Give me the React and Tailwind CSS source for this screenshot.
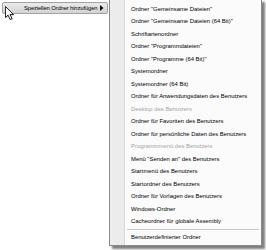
import React from 'react';

const items = [
  { label: 'Ordner "Gemeinsame Dateien"' },
  { label: 'Ordner "Gemeinsame Dateien (64 Bit)"' },
  { label: 'Schriftartenordner' },
  { label: 'Ordner "Programmdateien"' },
  { label: 'Ordner "Programme (64 Bit)"' },
  { label: 'Systemordner' },
  { label: 'Systemordner (64 Bit)' },
  { label: 'Ordner für Anwendungsdaten des Benutzers' },
  { label: 'Desktop des Benutzers', disabled: true },
  { label: 'Ordner für Favoriten des Benutzers' },
  { label: 'Ordner für persönliche Daten des Benutzers' },
  { label: 'Programmmenü des Benutzers', disabled: true },
  { label: 'Menü "Senden an" des Benutzers' },
  { label: 'Startmenü des Benutzers' },
  { label: 'Startordner des Benutzers' },
  { label: 'Ordner für Vorlagen des Benutzers' },
  { label: 'Windows-Ordner' },
  { label: 'Cacheordner für globale Assembly' },
];

const Row = ({ label, disabled }) => (
  <div
    className={`h-[12.5px] flex items-center pl-[5px] whitespace-nowrap ${
      disabled ? 'text-[#a4a4a4]' : 'text-black'
    }`}
  >
    {label}
  </div>
);

const Cursor = () => (
  <svg width="12" height="16" viewBox="0 0 12 16" className="absolute left-[4px] top-[5px]">
    <path d="M1.5 1.5 L1.5 12.5 L4 10 L6 14.5 L8 13.5 L6 9.5 L9.5 9.5 Z" fill="#000" opacity="0.25" transform="translate(1 1)" />
    <path d="M1.5 1.5 L1.5 12.5 L4 10 L6 14.5 L8 13.5 L6 9.5 L9.5 9.5 Z" fill="#fff" stroke="#111" strokeWidth="0.9" strokeLinejoin="round" />
  </svg>
);

export default function App() {
  return (
    <div className="w-[266px] h-[250px] bg-white relative overflow-hidden flex items-start font-['Liberation_Sans',Arial,sans-serif] text-[5.9px]">
      {/* Hauptmenü mit markiertem Eintrag */}
      <div className="w-[109px] pt-[2px] pl-[2px] pr-[1px]">
        <div className="h-[12px] flex items-center rounded-[2px] border border-[#a2a2a2] bg-gradient-to-b from-[#ebebeb] to-[#d2d2d2] pl-[21px] pr-[3px] text-black">
          <span className="flex-1 whitespace-nowrap tracking-[-0.15px]">Speziellen Ordner hinzufügen</span>
          <svg width="4" height="6" viewBox="0 0 4 6" className="shrink-0">
            <path d="M0 0 L3.5 3 L0 6 Z" fill="#111" />
          </svg>
        </div>
      </div>
      <Cursor />

      {/* Untermenü */}
      <div className="-mt-px w-[153px] h-[247px] border border-[#8a8a8a] bg-[#fbfbfb] flex shadow-[3px_3px_2px_rgba(0,0,0,0.5)]">
        <div className="w-[15px] bg-[#ececec] border-r border-[#d6d6d6]" />
        <div className="flex-1 flex flex-col pt-[3px] border-l border-white">
          {items.map((it) => (
            <Row key={it.label} {...it} />
          ))}
          <div className="h-[3px] flex flex-col justify-center pl-[1px] pr-[2px]">
            <div className="h-px bg-[#c8c8c8]" />
            <div className="h-px bg-white" />
          </div>
          <Row label="Benutzerdefinierter Ordner" />
        </div>
      </div>
    </div>
  );
}
